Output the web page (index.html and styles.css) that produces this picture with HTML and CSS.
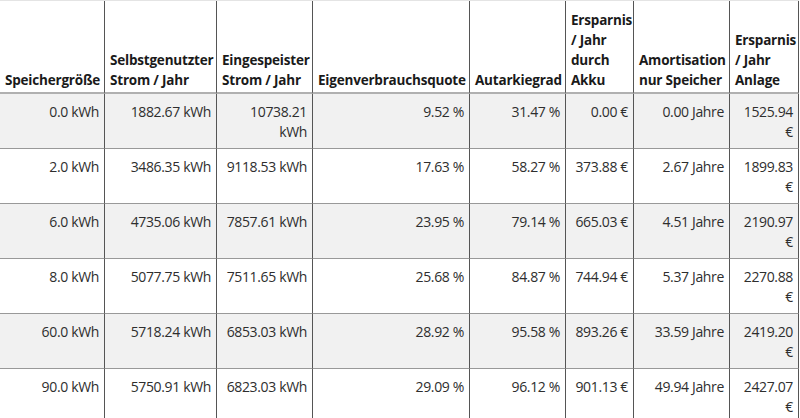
FILE: index.html
```html
<!DOCTYPE html>
<html lang="de">
<head>
<meta charset="utf-8">
<title>Speicher</title>
<link rel="stylesheet" href="styles.css">
</head>
<body>
<table class="results">
  <colgroup>
    <col class="c1"><col class="c2"><col class="c3"><col class="c4"><col class="c5"><col class="c6"><col class="c7"><col class="c8">
  </colgroup>
  <thead>
    <tr>
      <th>Speichergröße</th>
      <th>Selbstgenutzter Strom / Jahr</th>
      <th>Eingespeister Strom / Jahr</th>
      <th>Eigenverbrauchsquote</th>
      <th>Autarkiegrad</th>
      <th>Ersparnis / Jahr durch Akku</th>
      <th>Amortisation nur Speicher</th>
      <th>Ersparnis / Jahr Anlage</th>
    </tr>
  </thead>
  <tbody>
    <tr><td>0.0 kWh</td><td>1882.67 kWh</td><td>10738.21 kWh</td><td>9.52 %</td><td>31.47 %</td><td>0.00 €</td><td>0.00 Jahre</td><td>1525.94 €</td></tr>
    <tr><td>2.0 kWh</td><td>3486.35 kWh</td><td>9118.53 kWh</td><td>17.63 %</td><td>58.27 %</td><td>373.88 €</td><td>2.67 Jahre</td><td>1899.83 €</td></tr>
    <tr><td>6.0 kWh</td><td>4735.06 kWh</td><td>7857.61 kWh</td><td>23.95 %</td><td>79.14 %</td><td>665.03 €</td><td>4.51 Jahre</td><td>2190.97 €</td></tr>
    <tr><td>8.0 kWh</td><td>5077.75 kWh</td><td>7511.65 kWh</td><td>25.68 %</td><td>84.87 %</td><td>744.94 €</td><td>5.37 Jahre</td><td>2270.88 €</td></tr>
    <tr><td>60.0 kWh</td><td>5718.24 kWh</td><td>6853.03 kWh</td><td>28.92 %</td><td>95.58 %</td><td>893.26 €</td><td>33.59 Jahre</td><td>2419.20 €</td></tr>
    <tr><td>90.0 kWh</td><td>5750.91 kWh</td><td>6823.03 kWh</td><td>29.09 %</td><td>96.12 %</td><td>901.13 €</td><td>49.94 Jahre</td><td>2427.07 €</td></tr>
  </tbody>
</table>
</body>
</html>
```
FILE: styles.css
```css
html, body {
  margin: 0;
  padding: 0;
  background: #fff;
}
body {
  font-family: "Open Sans", "Noto Sans", sans-serif;
  font-size: 14px;
  letter-spacing: -0.35px;
  line-height: 20px;
  color: #2e2e2e;
}
.results {
  border-collapse: separate;
  border-spacing: 0;
  table-layout: fixed;
  width: 799px;
  border-top: 1px solid #e4e4e4;
}
.c1 { width: 105px; }
.c2 { width: 112px; }
.c3 { width: 96px; }
.c4 { width: 157px; }
.c5 { width: 96px; }
.c6 { width: 68px; }
.c7 { width: 96px; }
.c8 { width: 69px; }
.results th,
.results td {
  box-sizing: border-box;
  border-right: 1px solid #555;
  border-bottom: 1px solid #999;
  padding: 8px 5px 6px 5px;
}
.results th {
  text-align: left;
  vertical-align: bottom;
  font-size: 13.5px;
  letter-spacing: -0.2px;
  font-weight: 700;
  color: #1a1a1a;
  padding: 9px 4px 2px 5px;
  border-bottom: 2px solid #b0b0b0;
}
.results td {
  text-align: right;
  vertical-align: top;
}
.results tbody tr:nth-child(odd) td {
  background: #f1f1f1;
}
```
